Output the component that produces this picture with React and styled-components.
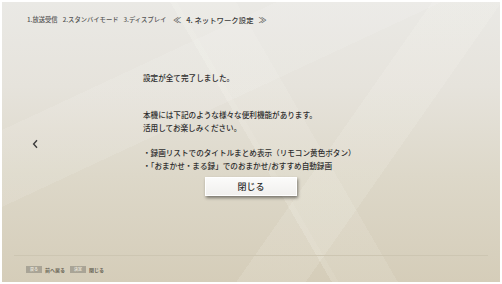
import React from "react";
import styled, { createGlobalStyle } from "styled-components";

const Global = createGlobalStyle`
  html, body { margin: 0; padding: 0; background: #fff; }
  body { font-family: "Noto Sans CJK JP", "Noto Sans", sans-serif; }
  #root { width: 502px; height: 284px; }
`;

const Frame = styled.div`
  width: 502px;
  height: 284px;
  box-sizing: border-box;
  border: 2px solid #fff;
  background: #fff;
`;

const Screen = styled.div`
  width: 100%;
  height: 100%;
  display: flex;
  flex-direction: column;
  overflow: hidden;
  background:
    linear-gradient(60deg, transparent 0 50%, rgba(255,255,248,0.16) 50% 51%, rgba(255,255,248,0.1) 51% 60%, transparent 60% 100%),
    linear-gradient(125deg, transparent 0 62%, rgba(255,255,248,0.12) 62% 72%, transparent 72% 100%),
    linear-gradient(155deg, transparent 0 25%, rgba(255,255,255,0.1) 25% 40%, transparent 40% 100%),
    linear-gradient(180deg, #eae9e5 0%, #e6e3dc 30%, #ddd8c9 62%, #d5cdb9 100%);
`;

const Header = styled.div`
  height: 34px;
  flex: none;
  display: flex;
  align-items: center;
  padding-left: 25px;
  gap: 5px;
`;

const Step = styled.span`
  font-size: ${p => (p.$current ? "7.4px" : "6.3px")};
  font-weight: 500;
  color: ${p => (p.$current ? "#3c3c3c" : "#555")};
  white-space: nowrap;
`;

const Mark = styled.span`
  font-size: 8px;
  font-weight: 500;
  color: #555;
  margin: ${p => p.$m};
`;

const Body = styled.div`
  flex: 1;
  display: grid;
  grid-template-columns: 141px 1fr;
`;

const ArrowCol = styled.div`
  padding: 94px 0 0 30px;
`;

const Content = styled.div`
  padding-top: 34.5px;
  color: #2e2e2e;
  font-size: 7.6px;
  font-weight: 500;
  line-height: 13px;
`;

const Para = styled.p`
  margin: ${p => p.$mt} 0 0 0;
  white-space: nowrap;
`;

const CloseButton = styled.button`
  display: block;
  margin: 5.5px 0 0 62px;
  width: 92px;
  height: 19px;
  border: 1px solid #fff;
  background: linear-gradient(180deg, #fbfbfa 0%, #f1f0ee 100%);
  box-shadow: 1px 2px 3px rgba(0,0,0,0.45);
  font-family: inherit;
  font-size: 9px;
  font-weight: 500;
  color: #2e2e2e;
  padding: 0;
`;

const Footer = styled.div`
  height: 26px;
  flex: none;
  margin: 0 12px;
  border-top: 1px solid #cdc6b2;
  display: flex;
  align-items: center;
  padding-left: 12px;
  gap: 3px;
`;

const Key = styled.span`
  display: inline-flex;
  align-items: center;
  justify-content: center;
  width: 16px;
  height: 7px;
  background: #a9a496;
  color: #e6e2d6;
  font-size: 4px;
  font-weight: 700;
  margin-left: ${p => p.$ml || 0};
`;

const KeyLabel = styled.span`
  font-size: 5px;
  font-weight: 700;
  color: #6a6658;
`;

export default function App() {
  return (
    <>
      <Global />
      <Frame>
        <Screen>
          <Header>
            <Step>1.放送受信</Step>
            <Step>2.スタンバイモード</Step>
            <Step>3.ディスプレイ</Step>
            <Mark $m="0 0 0 2px">≪</Mark>
            <Step $current>4. ネットワーク設定</Step>
            <Mark $m="0">≫</Mark>
          </Header>
          <Body>
            <ArrowCol>
              <svg width="7" height="10" viewBox="0 0 7 10">
                <path d="M5 1.2 L1.6 5 L5 8.8" fill="none" stroke="#3c3c3c" strokeWidth="1.4" />
              </svg>
            </ArrowCol>
            <Content>
              <Para $mt="0">設定が全て完了しました。</Para>
              <Para $mt="24px">
                本機には下記のような様々な便利機能があります。
                <br />
                活用してお楽しみください。
              </Para>
              <Para $mt="12px">
                ・録画リストでのタイトルまとめ表示（リモコン黄色ボタン）
                <br />
                ・「おまかせ・まる録」でのおまかせ/おすすめ自動録画
              </Para>
              <CloseButton>閉じる</CloseButton>
            </Content>
          </Body>
          <Footer>
            <Key>戻る</Key>
            <KeyLabel>前へ戻る</KeyLabel>
            <Key $ml="2px">決定</Key>
            <KeyLabel>閉じる</KeyLabel>
          </Footer>
        </Screen>
      </Frame>
    </>
  );
}
